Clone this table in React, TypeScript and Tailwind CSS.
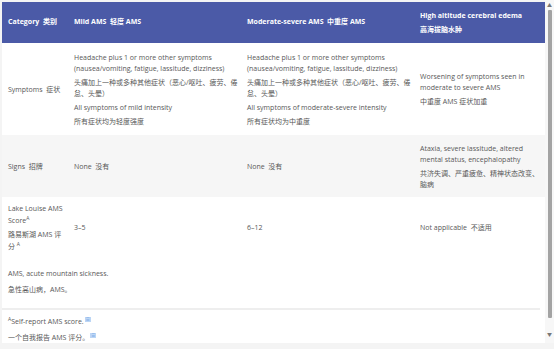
const rows = [
  {
    label: ["Symptoms  症状"],
    mild: [
      "Headache plus 1 or more other symptoms (nausea/vomiting, fatigue, lassitude, dizziness)",
      "头痛加上一种或多种其他症状（恶心/呕吐、疲劳、倦怠、头晕）",
      "All symptoms of mild intensity",
      "所有症状均为轻度强度",
    ],
    moderate: [
      "Headache plus 1 or more other symptoms (nausea/vomiting, fatigue, lassitude, dizziness)",
      "头痛加上一种或多种其他症状（恶心/呕吐、疲劳、倦怠、头晕）",
      "All symptoms of moderate-severe intensity",
      "所有症状均为中重度",
    ],
    hace: ["Worsening of symptoms seen in moderate to severe AMS", "中重度 AMS 症状加重"],
    bg: "bg-white",
    h: "h-[92px]",
  },
  {
    label: ["Signs  招牌"],
    mild: ["None  没有"],
    moderate: ["None  没有"],
    hace: ["Ataxia, severe lassitude, altered mental status, encephalopathy", "共济失调、严重疲惫、精神状态改变、脑病"],
    bg: "bg-[#f6f6f6]",
    h: "h-[62px]",
  },
];

const Cell = ({ lines, w }: { lines: string[]; w: string }) => (
  <div className={`${w} pl-[6px] pr-[3px] flex flex-col justify-center gap-[3px]`}>
    {lines.map((t, i) => (
      <p key={i} className="leading-[11px]">
        {t}
      </p>
    ))}
  </div>
);

const Sup = () => <span className="relative -top-[3px] text-[5px] leading-none">A</span>;

const RefIcon = () => (
  <span className="inline-block relative -top-[3px] ml-[1px] w-[6px] h-[5px] bg-[#bcd6f5] text-[#3b7bd8] text-[4px] leading-[5px] text-center">
    ≡
  </span>
);

export default function App() {
  return (
    <div
      className="w-[554px] h-[349px] bg-[#f4f4f4] flex overflow-hidden text-[7px] text-[#585858] whitespace-pre-wrap"
      style={{ fontFamily: '"Open Sans", "Noto Sans CJK SC", sans-serif' }}
    >
      <div className="flex-1 pl-[2px] pt-[2px]">
        <div className="bg-white h-[341px] flex flex-col">
          <div className="flex h-[41px] bg-[#4b5aa7] text-white font-bold">
            <div className="w-[66px] px-[6px] flex items-center">Category  类别</div>
            <div className="w-[173px] px-[6px] flex items-center">Mild AMS  轻度 AMS</div>
            <div className="w-[173px] px-[6px] flex items-center">Moderate-severe AMS  中重度 AMS</div>
            <div className="flex-1 px-[6px] flex flex-col justify-center gap-[4px]">
              <p className="leading-[10px]">High altitude cerebral edema</p>
              <p className="leading-[10px]">高海拔脑水肿</p>
            </div>
          </div>

          {rows.map((r, i) => (
            <div key={i} className={`flex ${r.h} ${r.bg}`}>
              <Cell lines={r.label} w="w-[66px]" />
              <Cell lines={r.mild} w="w-[173px]" />
              <Cell lines={r.moderate} w="w-[173px]" />
              <Cell lines={r.hace} w="flex-1" />
            </div>
          ))}

          <div className="flex h-[62px] bg-white">
            <div className="w-[66px] pl-[6px] pr-[3px] flex flex-col justify-center gap-[2px]">
              <p className="leading-[12px]">
                Lake Louise AMS Score<Sup />
              </p>
              <p className="leading-[12px]">
                路易斯湖 AMS 评分 <Sup />
              </p>
            </div>
            <div className="w-[173px] px-[6px] flex items-center">3–5</div>
            <div className="w-[173px] px-[6px] flex items-center">6–12</div>
            <div className="flex-1 px-[6px] flex items-center">Not applicable  不适用</div>
          </div>

          <div className="px-[6px] pt-[9px] flex flex-col gap-[5px]">
            <p className="leading-[11px]">AMS, acute mountain sickness.</p>
            <p className="leading-[11px]">急性高山病，AMS。</p>
          </div>

          <div className="mt-[13px] mr-[5px] h-[2px] bg-[#eeeeee]" />

          <div className="px-[6px] pt-[6px] flex flex-col gap-[5px]">
            <p className="leading-[11px]">
              <Sup />Self-report AMS score.<RefIcon />
            </p>
            <p className="leading-[11px]">
              一个自我报告 AMS 评分。<RefIcon />
            </p>
          </div>
        </div>
      </div>

      <div className="w-[9px] h-[343px] bg-[#f7f7f7] flex flex-col items-center">
        <span className="mt-[2px] text-[5px] leading-[6px] text-[#777]">▲</span>
        <div className="mt-[2px] w-[4px] h-[308px] bg-[#a3a3a3] rounded-[1px]" />
        <div className="flex-1" />
        <span className="mb-[6px] text-[5px] leading-[6px] text-[#777]">▼</span>
      </div>
    </div>
  );
}
